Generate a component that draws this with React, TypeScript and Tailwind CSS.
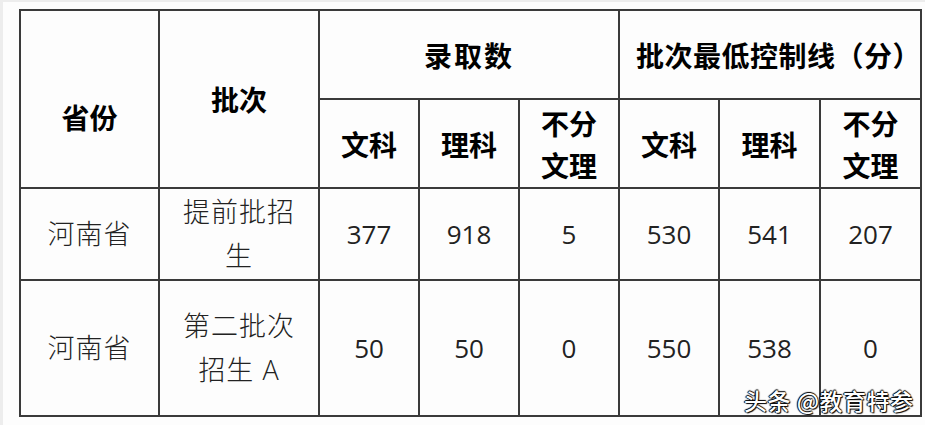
const cjk = "font-['Noto_Sans_CJK_SC',sans-serif]";
const body = "font-['Open_Sans','Noto_Sans_CJK_SC',sans-serif]";

const rows = [
  { province: "河南省", batch: ["提前批招", "生"], values: ["377", "918", "5", "530", "541", "207"], h: "h-[92px]" },
  { province: "河南省", batch: ["第二批次", "招生 A"], values: ["50", "50", "0", "550", "538", "0"], h: "h-[136px]" },
];

const cell = "border-2 border-[#3a3a3a] text-center align-middle p-0";

function TwoLine({ a, b }: { a: string; b: string }) {
  return (
    <div className="flex flex-col items-center leading-[42px]">
      <span>{a}</span>
      <span>{b}</span>
    </div>
  );
}

export default function App() {
  return (
    <div className="relative w-[925px] h-[425px] bg-[#fdfdfd] border-t-2 border-l-[3px] border-[#ededed] pt-[7px] pl-[16px] overflow-hidden">
      <table className="table-fixed border-collapse w-[901px] border-2 border-[#3a3a3a]">
        <colgroup>
          <col className="w-[139px]" />
          <col className="w-[160px]" />
          <col className="w-[100px]" />
          <col className="w-[100px]" />
          <col className="w-[100px]" />
          <col className="w-[100px]" />
          <col className="w-[101px]" />
          <col className="w-[101px]" />
        </colgroup>
        <thead className={`${cjk} font-bold text-[28px] text-black`}>
          <tr className="h-[89px]">
            <th rowSpan={2} className={cell}>
              <div className="pt-[36px]">省份</div>
            </th>
            <th rowSpan={2} className={cell}>批次</th>
            <th colSpan={3} className={cell}>
              <span className="tracking-[2px]">录取数</span>
            </th>
            <th colSpan={3} className={cell}>
              <span className="tracking-[0.5px] pl-[16px]">批次最低控制线（分）</span>
            </th>
          </tr>
          <tr className="h-[89px]">
            <th className={cell}>文科</th>
            <th className={cell}>理科</th>
            <th className={cell}>
              <TwoLine a="不分" b="文理" />
            </th>
            <th className={cell}>文科</th>
            <th className={cell}>理科</th>
            <th className={cell}>
              <TwoLine a="不分" b="文理" />
            </th>
          </tr>
        </thead>
        <tbody className={`${body} text-[26px] text-[#222]`}>
          {rows.map((r, i) => (
            <tr key={i} className={r.h}>
              <td className={`${cell} font-light text-[27px] tracking-[1px]`}>{r.province}</td>
              <td className={`${cell} font-light text-[27px]`}>
                <div className="flex flex-col items-center leading-[44px] tracking-[1px]">
                  <span>{r.batch[0]}</span>
                  <span>{r.batch[1]}</span>
                </div>
              </td>
              {r.values.map((v, j) => (
                <td key={j} className={cell}>{v}</td>
              ))}
            </tr>
          ))}
        </tbody>
      </table>
      <div
        className={`absolute left-[741px] top-[381px] ${cjk} font-medium text-[23px] text-white tracking-[0.5px] [text-shadow:0_0_1px_#000,1px_1px_1px_#000,-1px_0_1px_#000,0_-1px_1px_#000]`}
      >
        头条 @教育特参
      </div>
    </div>
  );
}
